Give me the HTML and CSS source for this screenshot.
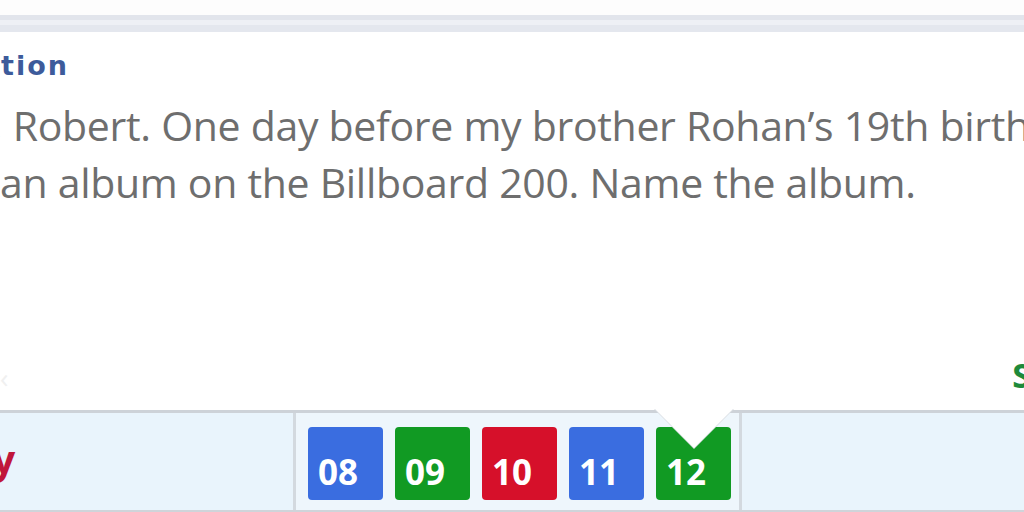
FILE: index.html
```html
<!DOCTYPE html>
<html>
<head>
<meta charset="utf-8">
<link rel="stylesheet" href="styles.css">
</head>
<body>
<div class="page">
  <div class="top-strip"></div>
  <div class="tab-edge"></div>
  <main class="panel">
    <h2 class="label">tion</h2>
    <p class="question">
      <span class="line first">, Robert. One day before my brother Rohan’s 19th birthday</span>
      <span class="line">an album on the Billboard 200. Name the album.</span>
    </p>
    <div class="actions">
      <span class="ghost">‹</span>
      <span class="skip">Skip</span>
    </div>
  </main>
  <footer class="bar">
    <div class="status">Easy</div>
    <nav class="tiles">
      <div class="tile blue">08</div>
      <div class="tile green">09</div>
      <div class="tile red">10</div>
      <div class="tile blue">11</div>
      <div class="tile green current">12<span class="pointer"></span></div>
    </nav>
    <div class="rest"></div>
  </footer>
</div>
</body>
</html>
```

FILE: styles.css
```css
html, body {
  margin: 0;
  padding: 0;
}
body {
  width: 1024px;
  height: 512px;
  overflow: hidden;
  background: #ffffff;
  font-family: "Open Sans", "Liberation Sans", sans-serif;
}
.page {
  display: flex;
  flex-direction: column;
  height: 512px;
}
.top-strip {
  height: 15px;
  background: #fdfdfd;
}
.tab-edge {
  height: 5px;
  background: #eef0f5;
  border-top: 5px solid #e2e5ec;
  border-bottom: 7px solid #e4e7ee;
}
.panel {
  flex: 1;
  display: flex;
  flex-direction: column;
  background: #ffffff;
  overflow: hidden;
}
.label {
  margin: 19px 0 0 1px;
  font-family: "DejaVu Sans", sans-serif;
  font-weight: bold;
  font-size: 27px;
  line-height: 30px;
  letter-spacing: 2px;
  color: #3d5b9b;
}
.question {
  margin: 16px 0 0 0;
  color: #6e6e6e;
  font-size: 41px;
  line-height: 57px;
  letter-spacing: -0.3px;
  white-space: nowrap;
}
.line {
  display: block;
}
.first {
  margin-left: -8px;
}
.actions {
  margin-top: auto;
  display: flex;
  justify-content: space-between;
  align-items: flex-end;
  height: 40px;
  padding-bottom: 18px;
}
.ghost {
  color: #f0f0f0;
  font-size: 28px;
  line-height: 30px;
}
.skip {
  color: #1e8a3a;
  font-weight: bold;
  font-size: 34px;
  line-height: 34px;
  margin-right: -60px;
}
.bar {
  height: 97px;
  display: flex;
  background: #e9f4fc;
  border-top: 3px solid #cdd2d8;
  border-bottom: 2px solid #cfd4da;
}
.status {
  flex: 0 0 auto;
  width: 367px;
  margin-left: -74px;
  color: #c0163a;
  font-weight: bold;
  font-size: 40px;
  line-height: 92px;
  box-sizing: border-box;
  overflow: hidden;
  white-space: nowrap;
}
.tiles {
  flex: 0 0 auto;
  display: flex;
  gap: 12px;
  padding: 14px 8px 0 12px;
  border-left: 3px solid #d3d9df;
  border-right: 3px solid #d3d9df;
  background: #eef6fc;
}
.tile {
  position: relative;
  width: 75px;
  height: 73px;
  border-radius: 4px;
  box-sizing: border-box;
  padding: 0 0 0 10px;
  color: #ffffff;
  font-weight: bold;
  font-size: 35px;
  line-height: 90px;
  overflow: visible;
}
.blue { background: #3a6de0; }
.green { background: #119a23; }
.red { background: #d6102a; }
.pointer {
  position: absolute;
  top: -19px;
  left: 50%;
  margin-left: -40px;
  width: 0;
  height: 0;
  border-left: 40px solid transparent;
  border-right: 40px solid transparent;
  border-top: 40px solid #ffffff;
  filter: drop-shadow(0 1px 0 #d9dde2);
}
.rest {
  flex: 1;
}
```
